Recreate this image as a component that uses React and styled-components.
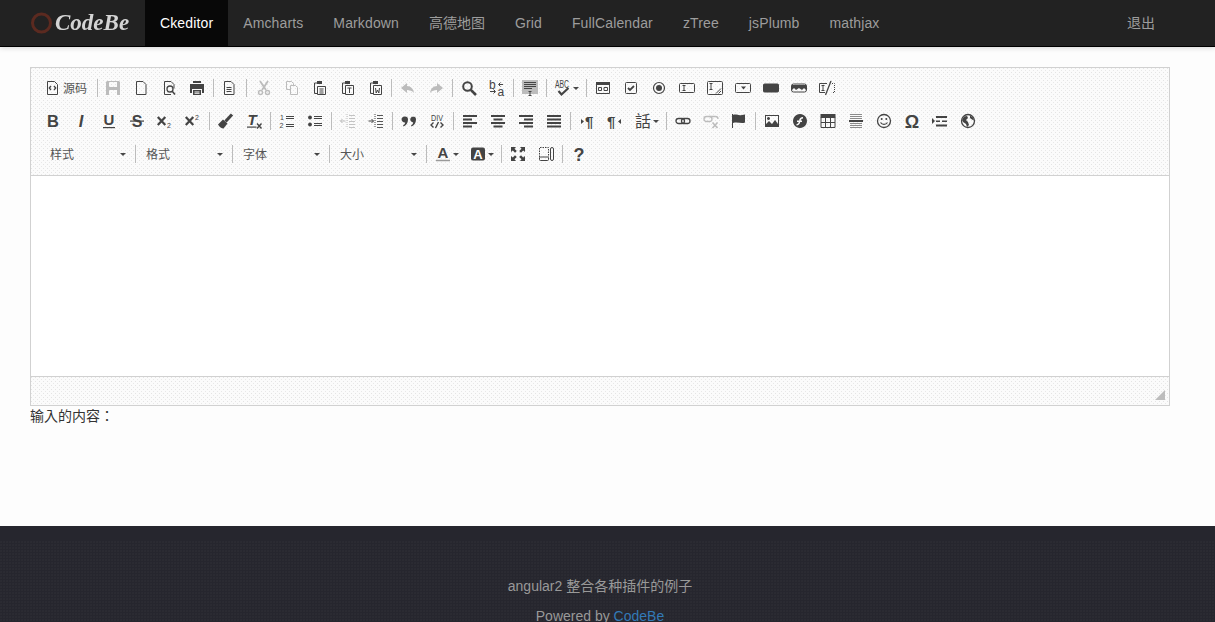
import React from "react";
import styled, { createGlobalStyle } from "styled-components";

const CJK = '"Liberation Sans", "Noto Sans CJK SC", sans-serif';

const speckle = `
  radial-gradient(circle at 0.5px 0.5px, #e4e4e4 0.6px, transparent 0.7px) 0 0 / 4px 4px,
  radial-gradient(circle at 2.5px 2.5px, #e8e8e8 0.6px, transparent 0.7px) 0 0 / 4px 4px,
  #fbfbfb
`;

const Global = createGlobalStyle`
  html, body { margin: 0; padding: 0; overflow: hidden; background: #fdfdfd; }
  body { font: 14px/20px ${CJK}; color: #333; }
`;

const NavBar = styled.nav`
  height: 46px;
  background: #222;
  border-bottom: 1px solid #000;
  box-shadow: 0 1px 5px rgba(0, 0, 0, 0.16);
  position: relative;
`;
const NavInner = styled.div`
  width: 1200px;
  height: 46px;
  box-sizing: border-box;
  padding: 0 30px;
  display: flex;
`;
const Brand = styled.a`
  width: 115px;
  display: flex;
  align-items: center;
  gap: 2px;
  font: italic bold 23px "Liberation Serif", serif;
  color: #d4d4d4;
  span { filter: blur(0.5px); }
  svg { filter: blur(0.7px); }
`;
const NavLink = styled.a`
  display: block;
  padding: 13px 15px;
  letter-spacing: ${(p) => (p.$cjk ? "0" : "0.13px")};
  color: ${(p) => (p.$active ? "#fff" : "#9d9d9d")};
  background-color: ${(p) => (p.$active ? "#080808" : "transparent")};
  margin-left: ${(p) => (p.$push ? "auto" : "0")};
`;

const Main = styled.main`
  width: 1140px;
  margin: 20px 0 0 30px;
  height: 459px;
`;
const Editor = styled.section`
  border: 1px solid #d1d1d1;
`;
const Toolbar = styled.div`
  height: 108px;
  box-sizing: border-box;
  padding: 4px 0 0 8px;
  border-bottom: 1px solid #d1d1d1;
  background: ${speckle};
`;
const Row = styled.div`
  display: flex;
  align-items: flex-start;
  height: 25px;
  padding: 8px 0 0 ${(p) => p.$indent || 0}px;
`;
const Tool = styled.div`
  display: flex;
  align-items: center;
  height: 16px;
  width: ${(p) => p.$w || 28}px;
  flex: none;
  box-sizing: border-box;
  padding-left: 6px;
  color: ${(p) => (p.$muted ? "#bcbcbc" : "#444")};
`;
const Glyph = styled.svg`
  width: 16px;
  height: 16px;
  flex: none;
  fill: none;
  overflow: visible;
  stroke: currentColor;
  stroke-width: 1;
  text {
    font-family: "Liberation Sans", "Noto Sans CJK TC", sans-serif;
    fill: currentColor;
    stroke: none;
  }
`;
const Label = styled.span`
  font-size: 12px;
  line-height: 16px;
  margin: 2px 0 0 1px;
  color: #555;
`;
const Caret = styled.i`
  display: block;
  flex: none;
  width: 0;
  height: 0;
  margin-left: 2px;
  border: 3px solid transparent;
  border-top-color: #474747;
  border-bottom: 0;
`;
const Sep = styled.span`
  display: block;
  flex: none;
  width: 1px;
  height: 18px;
  margin: -1px ${(p) => p.$r ?? 2}px 0 ${(p) => p.$l ?? 2}px;
  background: #bcbcbc;
`;
const Combo = styled.div`
  display: flex;
  align-items: center;
  justify-content: space-between;
  width: ${(p) => p.$w}px;
  height: 16px;
  flex: none;
  box-sizing: border-box;
  padding: 0 8px 0 10px;
`;
const ComboText = styled.span`
  font-size: 12px;
  line-height: 16px;
  margin-top: 2px;
  color: #555;
`;
const Body = styled.div`
  height: 200px;
  background: #fff;
`;
const Status = styled.div`
  height: 29px;
  box-sizing: border-box;
  border-top: 1px solid #d1d1d1;
  background: ${speckle};
  display: flex;
  justify-content: flex-end;
  align-items: flex-end;
  padding: 0 4px 5px 0;
`;
const Grip = styled.span`
  width: 0;
  height: 0;
  border-style: solid;
  border-width: 0 0 10px 10px;
  border-color: transparent transparent #bdbdbd transparent;
`;
const Output = styled.p`
  margin: 0;
  height: 20px;
  font-family: "Liberation Sans", "Noto Sans CJK TC", sans-serif;
`;
const Footer = styled.footer`
  height: 96px;
  box-sizing: border-box;
  padding-top: 50px;
  color: #999;
  background:
    linear-gradient(#26262e, #26262e) 0 0 / 100% 14px no-repeat,
    radial-gradient(circle at 1px 1px, #2b2b33 0.7px, transparent 0.8px) 0 0 / 3px 3px,
    #26262e;
`;
const FooterInner = styled.div`
  width: 1200px;
  text-align: center;
`;
const FooterLine = styled.p`
  margin: 0 0 10px;
`;
const Link = styled.a`
  color: #337ab7;
`;

const F = (p) => <path fill="currentColor" stroke="none" {...p} />;

const doc = "M3.5 1.5h6.5l3 3v10h-9.5z";
const clip = (<><path d="M5 3H2.5v10.5H5" /><F d="M5 1h5v3H5z" /></>);
const icons = {
  source: (<><path d="M1.500 1.500h7l3 3v10h-10z" /><path d="M5 6 3.300 8 5 10M8 6l1.700 2L8 10" strokeWidth="1.300" /></>),
  save: <F fillRule="evenodd" d="M2 1h12l1 1v13H1V2zM4 2v5h8V2zM4 10v5h8v-5z" />,
  newpage: <path d={doc} />,
  preview: (<><path d="M10 14.500H3.500v-13H10l3 3v4" /><circle cx="9" cy="9" r="3" strokeWidth="1.300" /><path d="M11 11l3 3.500" strokeWidth="1.600" /></>),
  print: <F fillRule="evenodd" d="M4 1h8v2H4zM1 4h14v9h-2V9H3v4H1zM4 10h8v5H4zM5.500 11.500v1h5v-1zM5.500 13.300v.8h5v-.8z" />,
  templates: (<><path d={doc} /><path d="M5.500 7.500h5M5.500 9.500h5M5.500 11.500h5" /></>),
  cut: (<><path d="M4 1l6 9M12 1L6 10" strokeWidth="1.800" /><circle cx="4.500" cy="12.500" r="2" strokeWidth="1.400" /><circle cx="11.500" cy="12.500" r="2" strokeWidth="1.400" /></>),
  copy: (<><path d="M6.500 9.500h-4v-8h5l2 2v2" /><path d="M6.500 5.500h5l2 2v7h-7z" /></>),
  paste: (<>{clip}<path d="M5.500 6.500h8v8h-8zM7.500 9h4M7.500 11h4M7.500 13h4" /></>),
  pastetext: (<>{clip}<path d="M5.500 5.500h8v9h-8zM7.500 8h4M9.500 8v5" /></>),
  pasteword: (<>{clip}<path d="M5.500 5.500h8v9h-8zM7.500 8l.7 5 1.300-3 1.300 3 .7-5" /></>),
  undo: <F d="M7 3 1 8l6 5V10c3 0 5 .8 7 3-.6-4-3-7-7-7z" />,
  redo: <F d="M9 3l6 5-6 5V10c-3 0-5 .8-7 3 .6-4 3-7 7-7z" />,
  find: (<><circle cx="6.500" cy="6.500" r="4.300" strokeWidth="2" /><path d="M9.800 9.800 15 15" strokeWidth="2.600" /></>),
  replace: (<><text x="0" y="9" fontSize="12">b</text><text x="8.500" y="15.500" fontSize="12">a</text><path d="M14 4.500h-4M11.500 2.500l-2 2 2 2M1 11.500h5M4.500 9.500l2 2-2 2" /></>),
  selectall: (<><F style={{ fill: "#bcbcbc" }} d="M0 0h16v14H0z" /><path d="M2 2.500h12M2 4.500h12M2 6.500h12M2 8.500h8" /><path d="M6.500 11.500h3M8 11.500v4M6.500 15.500h3" /></>),
  spell: (<><text x="0" y="8" fontSize="10" textLength="14" lengthAdjust="spacingAndGlyphs">ABC</text><path d="M3.500 11l3 3.500 7-6.500" strokeWidth="2.200" /></>),
  form: (<><path d="M1.500 2.500h13v11h-13z" /><F d="M1 2h14v3H1z" /><path d="M3.500 7.500h3v3h-3zM9 7.500h3.500v3H9z" /></>),
  checkbox: (<><rect x="2.500" y="2.500" width="11" height="11" rx="1" /><path d="M5 8l2 2 4-4" strokeWidth="1.800" /></>),
  radio: (<><circle cx="8" cy="8" r="5.500" strokeWidth="1.200" /><circle cx="8" cy="8" r="3" fill="currentColor" stroke="none" /></>),
  textfield: (<><rect x="0.500" y="3.500" width="15" height="9" rx="1" /><path d="M3.500 5.500h3M5 5.500v5M3.500 10.500h3" /></>),
  textarea: (<><rect x="0.500" y="1.500" width="15" height="13" rx="1" /><path d="M2.500 3.500h3M4 3.500v6M2.500 9.500h3M9 13.500l5-5M11.500 13.500l2.500-2.500" /></>),
  select: (<><rect x="0.500" y="3.500" width="15" height="9" rx="1" /><F d="M6 6.500h5L8.500 9.500z" /></>),
  button: <rect x="0.500" y="4" width="15" height="8" rx="1" fill="currentColor" />,
  imagebutton: (<><rect x="0.500" y="4" width="15" height="8" rx="2" /><F d="M1 5h14v5l-2-2-2 2-3-2-3 2-2-2-2 2z" /></>),
  hidden: (<><path d="M8 3.500H.5v9H6" /><path d="M13 3.500h2.500v9H13" strokeDasharray="1 1" /><path d="M2.500 5.500h3M4 5.500v5M2.500 10.500h3" /><path d="M12 1 6.500 15" strokeWidth="1.300" /></>),
  bold: <text x="8" y="13.500" fontSize="16.500" fontWeight="700" textAnchor="middle">B</text>,
  italic: <text x="8" y="13.500" fontSize="16.500" fontWeight="700" fontStyle="italic" textAnchor="middle">I</text>,
  underline: (<><text x="8" y="12" fontSize="15" fontWeight="700" textAnchor="middle">U</text><F d="M2 14h12v1.200H2z" /></>),
  strike: (<><text x="8" y="13.500" fontSize="16" fontWeight="700" textAnchor="middle">S</text><F d="M1 7.500h14v1.200H1z" /></>),
  sub: (<><path d="M.8 4l7.500 8M8.300 4 .8 12" strokeWidth="2.200" /><text x="10" y="14.500" fontSize="7">2</text></>),
  sup: (<><path d="M.8 4l7.500 8M8.300 4 .8 12" strokeWidth="2.200" /><text x="10" y="6.500" fontSize="7">2</text></>),
  brush: (<><F d="M0 11.500 5 6.500l4.500 4L5.500 15.500c-2 0-4-1.500-5.500-4z" /><path d="M7.500 8.500l6.500-7" strokeWidth="3.200" /></>),
  removeformat: (<><text x="1.500" y="12" fontSize="15" fontWeight="700" fontStyle="italic">T</text><F d="M1 13.500h9.500v1.200H1z" /><path d="M11 10.500l4.500 5M15.500 10.500 11 15.500" strokeWidth="1.400" /></>),
  ol: (<><text x="1" y="7" fontSize="7">1</text><text x="0.500" y="15" fontSize="7">2</text><path d="M7 3.500h8M7 5.500h8M7 11.500h8M7 13.500h8" /></>),
  ul: (<><circle cx="3" cy="4.500" r="1.900" fill="currentColor" stroke="none" /><circle cx="3" cy="11.500" r="1.900" fill="currentColor" stroke="none" /><path d="M7 3.500h8M7 5.500h8M7 10.500h8M7 12.500h8" /></>),
  outdent: (<><path d="M9 2.500h6M9 5.500h6M9 8.500h6M9 11.500h6M9 14.500h6" strokeWidth="0.900" /><path d="M7 1v14" strokeDasharray="1 1" /><path d="M5.500 8H.5M2.500 6l-2 2 2 2" /></>),
  indent: (<><path d="M9 2.500h6M9 5.500h6M9 8.500h6M9 11.500h6M9 14.500h6" strokeWidth="0.900" /><path d="M7 1v14" strokeDasharray="1 1" /><path d="M.5 8h5M3.500 6l2 2-2 2" /></>),
  quote: (<><F d="M4 3.500a3 3 0 0 1 3 3c0 3.500-2 6-4.500 7l-.5-1c1.200-.7 2-1.800 2.200-3.100A3 3 0 1 1 4 3.500z" /><F d="M12 3.500a3 3 0 0 1 3 3c0 3.500-2 6-4.500 7l-.5-1c1.200-.7 2-1.800 2.200-3.100a3 3 0 1 1 .8-5.900z" /></>),
  div: (<><text x="2" y="7.500" fontSize="9" textLength="12" lengthAdjust="spacingAndGlyphs">DIV</text><path d="M4.500 9.500 2 12l2.500 2.500M11.500 9.500 14 12l-2.500 2.500M9.500 9l-3 6" strokeWidth="1.400" /></>),
  left: <F d="M1 2h14v2H1zM1 5.500h9v2H1zM1 9h14v2H1zM1 12.500h9v2H1z" />,
  center: <F d="M1 2h14v2H1zM3.500 5.500h9v2h-9zM1 9h14v2H1zM3.500 12.500h9v2h-9z" />,
  right: <F d="M1 2h14v2H1zM6 5.500h9v2H6zM1 9h14v2H1zM6 12.500h9v2H6z" />,
  justify: <F d="M1 2h14v2H1zM1 5.500h14v2H1zM1 9h14v2H1zM1 12.500h14v2H1z" />,
  ltr: (<><text x="6" y="13.500" fontSize="15" fontWeight="700">¶</text><F d="M2 6l3 2.500L2 11z" /></>),
  rtl: (<><text x="0" y="13.500" fontSize="15" fontWeight="700">¶</text><F d="M14 6l-3 2.500 3 2.500z" /></>),
  lang: <text x="8" y="14" fontSize="16" textAnchor="middle">話</text>,
  link: (<><rect x="1" y="5.500" width="8.500" height="5" rx="2.500" strokeWidth="1.300" /><rect x="6.500" y="5.500" width="8.500" height="5" rx="2.500" strokeWidth="1.300" /></>),
  unlink: (<><rect x="1" y="3.500" width="8" height="5" rx="2.500" strokeWidth="1.300" /><path d="M6.500 3.500h6a2.500 2.500 0 0 1 2.500 2.500" strokeWidth="1.300" /><path d="M9.500 9.500l5 5.500M14.500 9.500l-5 5.500" strokeWidth="1.600" /></>),
  anchor: (<><path d="M1.500 1v14" /><F d="M2 2c3-1.500 5 1 9 0l3-.5v8c-4 1.500-7-1-12 .5z" /></>),
  image: <F fillRule="evenodd" d="M1 2h14v12H1zM2 3v8l3-3 3 3 3-4 3 4V3zM4.500 4a1.500 1.500 0 1 0 .01 0z" />,
  flash: <F fillRule="evenodd" d="M8 1a7 7 0 1 1-.01 0zM11 4c-2.500 0-3.500 1.500-4 3.500H5v1.500h1.700C6.300 10.500 5.500 11 4.500 11v1.500c2 0 3.300-1.500 3.800-3.500H10V7.500H8.700c.3-1 1-2 2.300-2z" />,
  table: (<><F d="M0.500 1h15v4h-15z" /><path d="M1 4.500h14v10H1zM1 9.500h14M5.500 4.500v10M10.500 4.500v10" /></>),
  hr: (<><path d="M2 1.500h12M2 3.500h12M2 5.500h12M2 10.500h12M2 12.500h12M2 14.500h12" stroke="#8b8b8b" /><F d="M1 7h14v2H1z" /></>),
  smiley: (<><circle cx="8" cy="8" r="6.500" strokeWidth="1.300" /><circle cx="5.700" cy="6" r="1" fill="currentColor" stroke="none" /><circle cx="10.300" cy="6" r="1" fill="currentColor" stroke="none" /><path d="M4.500 9.500c1.500 2.500 5.500 2.500 7 0" strokeWidth="1.200" /></>),
  omega: <text x="8" y="14.500" fontSize="18" fontWeight="700" textAnchor="middle">Ω</text>,
  pagebreak: (<><F d="M0 5l3 3-3 3z" /><F d="M4 3h11v2H4zM4 7.500h4v1.500H4zM10 7.500h5v1.500h-5zM4 11.500h11v2H4z" /></>),
  iframe: (<><circle cx="8" cy="8" r="6.500" strokeWidth="1.300" /><F d="M4 3.500 7 3l1 2-2 2 2 2 1 3-2 2-1-3-3-2-1-2zM10 2.500l3 2 1 3-2-1-2-1.500z" /></>),
  fontcolor: (<><text x="8" y="12" fontSize="15" fontWeight="700" textAnchor="middle">A</text><path d="M1 14.500h14" stroke="#9a9a9a" strokeWidth="1.500" /></>),
  bgcolor: (<><rect x="1" y="1.500" width="14" height="13" rx="2" fill="currentColor" stroke="none" /><text x="8" y="13" style={{ fill: "#fff" }} fontSize="13" fontWeight="700" textAnchor="middle">A</text></>),
  maximize: <F d="M1 1h5L4.500 2.800 6.800 5 5 6.800 2.800 4.500 1 6zM15 1v5l-1.800-1.500L11 6.800 9.200 5l2.300-2.200L10 1zM1 15v-5l1.800 1.500L5 9.200 6.800 11l-2.300 2.200L6 15zM15 15h-5l1.500-1.800L9.200 11 11 9.200l2.200 2.300L15 10z" />,
  blocks: (<><path d="M1.500 11V1.500h9V11" strokeDasharray="1.500 1" /><rect x="1.500" y="11" width="9" height="3.500" rx="1" /><rect x="12.500" y="1.500" width="3" height="13" rx="1.500" /></>),
  help: <text x="8" y="14.500" fontSize="18" fontWeight="700" textAnchor="middle">?</text>,
};

const I = (name, muted) => ({ name, muted });
const S = (l, r) => ({ sep: true, l, r });

const row1 = [
  { name: "source", label: "源码", w: 55 }, S(2, 1),
  I("save", true), I("newpage"), I("preview"), I("print"), S(2, 1),
  I("templates"), S(3, 3),
  I("cut", true), I("copy", true), I("paste"), I("pastetext"), I("pasteword"), S(1, 2),
  I("undo", true), I("redo", true), S(),
  I("find"), I("replace"), S(),
  I("selectall"), S(),
  { name: "spell", caret: true, w: 35 }, S(),
  I("form"), I("checkbox"), I("radio"), I("textfield"), I("textarea"), I("select"), I("button"), I("imagebutton"), I("hidden"),
];
const row2 = [
  I("bold"), I("italic"), I("underline"), I("strike"), I("sub"), I("sup"), S(),
  I("brush"), I("removeformat"), S(),
  I("ol"), I("ul"), S(),
  I("outdent", true), I("indent"), S(),
  I("quote"), I("div"), S(),
  I("left"), I("center"), I("right"), I("justify"), S(),
  I("ltr"), I("rtl"), { name: "lang", caret: true, w: 35 }, S(),
  I("link"), I("unlink", true), I("anchor"), S(),
  I("image"), I("flash"), I("table"), I("hr"), I("smiley"), I("omega"), I("pagebreak"), I("iframe"),
];
const row3 = [
  { combo: "样式", w: 94 }, S(1, 0),
  { combo: "格式", w: 95 }, S(1, 0),
  { combo: "字体", w: 95 }, S(1, 0),
  { combo: "大小", w: 95 }, S(1, 2),
  { name: "fontcolor", caret: true, w: 35 }, { name: "bgcolor", caret: true, w: 35 }, S(),
  I("maximize"), I("blocks"), S(),
  I("help"),
];

function Item({ item }) {
  if (item.sep) return <Sep $l={item.l} $r={item.r} />;
  if (item.combo)
    return (
      <Combo $w={item.w}>
        <ComboText>{item.combo}</ComboText>
        <Caret />
      </Combo>
    );
  return (
    <Tool $w={item.w} $muted={item.muted}>
      <Glyph viewBox="0 0 16 16">{icons[item.name]}</Glyph>
      {item.label && <Label>{item.label}</Label>}
      {item.caret && <Caret />}
    </Tool>
  );
}

const navItems = [
  { t: "Amcharts" }, { t: "Markdown" }, { t: "高德地图", cjk: true }, { t: "Grid" },
  { t: "FullCalendar" }, { t: "zTree" }, { t: "jsPlumb" }, { t: "mathjax" },
];

export default function App() {
  return (
    <>
      <Global />
      <NavBar>
        <NavInner>
          <Brand>
            <svg width="23" height="24" viewBox="0 0 23 24" aria-hidden="true">
              <circle cx="11.500" cy="12" r="9" fill="none" stroke="#5b2a20" strokeWidth="3" />
            </svg>
            <span>CodeBe</span>
          </Brand>
          <NavLink $active>Ckeditor</NavLink>
          {navItems.map((n) => (
            <NavLink key={n.t} $cjk={n.cjk}>{n.t}</NavLink>
          ))}
          <NavLink $push $cjk>退出</NavLink>
        </NavInner>
      </NavBar>
      <Main>
        <Editor>
          <Toolbar>
            {[row1, row2, row3].map((row, r) => (
              <Row key={r} $indent={r === 1 ? 0 : 1}>
                {row.map((it, i) => (
                  <Item key={i} item={it} />
                ))}
              </Row>
            ))}
          </Toolbar>
          <Body />
          <Status>
            <Grip />
          </Status>
        </Editor>
        <Output>输入的内容：</Output>
      </Main>
      <Footer>
        <FooterInner>
          <FooterLine>angular2 整合各种插件的例子</FooterLine>
          <FooterLine>
            Powered by <Link>CodeBe</Link>
          </FooterLine>
        </FooterInner>
      </Footer>
    </>
  );
}
